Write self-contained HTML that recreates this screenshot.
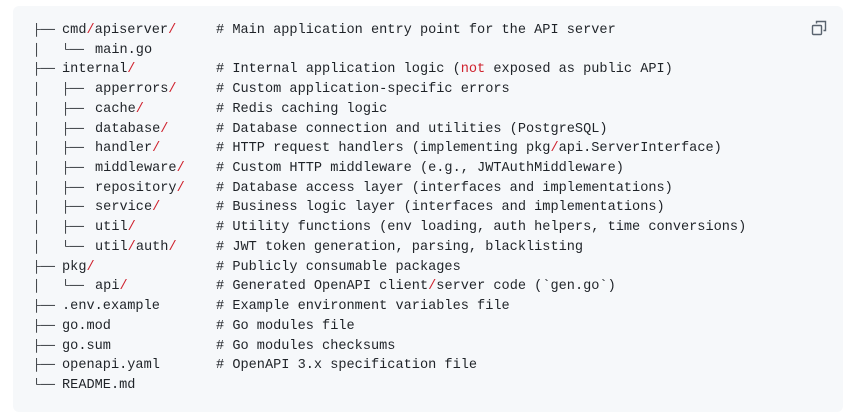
<!DOCTYPE html>
<html><head><style>
html,body{margin:0;padding:0;background:#fff;width:863px;height:420px;overflow:hidden}
.box{position:absolute;left:13px;top:6px;width:830px;height:406px;background:#f6f8fa;border-radius:6px}
.pre{position:absolute;left:20px;top:15px;font-family:"Liberation Mono",monospace;font-size:13.6px;color:#1f2328}
.l{position:relative;height:19.72px;line-height:19.72px;white-space:pre}
.l span{position:absolute;top:0}
.t1,.t2{font-size:12.2px}
.t1{left:0}.n1{left:29px}.t2{left:29px}.n2{left:62px}.c{left:183px}
i{color:#cf222e;font-style:normal}
svg{position:absolute;left:798px;top:14px}
</style></head><body>
<div class="box">
<div class="pre">
<div class="l"><span class="t1">├──</span><span class="n1">cmd<i>/</i>apiserver<i>/</i></span><span class="c"># Main application entry point for the API server</span></div>
<div class="l"><span class="t1">│</span><span class="t2">└──</span><span class="n2">main.go</span></div>
<div class="l"><span class="t1">├──</span><span class="n1">internal<i>/</i></span><span class="c"># Internal application logic (<i>not</i> exposed as public API)</span></div>
<div class="l"><span class="t1">│</span><span class="t2">├──</span><span class="n2">apperrors<i>/</i></span><span class="c"># Custom application-specific errors</span></div>
<div class="l"><span class="t1">│</span><span class="t2">├──</span><span class="n2">cache<i>/</i></span><span class="c"># Redis caching logic</span></div>
<div class="l"><span class="t1">│</span><span class="t2">├──</span><span class="n2">database<i>/</i></span><span class="c"># Database connection and utilities (PostgreSQL)</span></div>
<div class="l"><span class="t1">│</span><span class="t2">├──</span><span class="n2">handler<i>/</i></span><span class="c"># HTTP request handlers (implementing pkg<i>/</i>api.ServerInterface)</span></div>
<div class="l"><span class="t1">│</span><span class="t2">├──</span><span class="n2">middleware<i>/</i></span><span class="c"># Custom HTTP middleware (e.g., JWTAuthMiddleware)</span></div>
<div class="l"><span class="t1">│</span><span class="t2">├──</span><span class="n2">repository<i>/</i></span><span class="c"># Database access layer (interfaces and implementations)</span></div>
<div class="l"><span class="t1">│</span><span class="t2">├──</span><span class="n2">service<i>/</i></span><span class="c"># Business logic layer (interfaces and implementations)</span></div>
<div class="l"><span class="t1">│</span><span class="t2">├──</span><span class="n2">util<i>/</i></span><span class="c"># Utility functions (env loading, auth helpers, time conversions)</span></div>
<div class="l"><span class="t1">│</span><span class="t2">└──</span><span class="n2">util<i>/</i>auth<i>/</i></span><span class="c"># JWT token generation, parsing, blacklisting</span></div>
<div class="l"><span class="t1">├──</span><span class="n1">pkg<i>/</i></span><span class="c"># Publicly consumable packages</span></div>
<div class="l"><span class="t1">│</span><span class="t2">└──</span><span class="n2">api<i>/</i></span><span class="c"># Generated OpenAPI client<i>/</i>server code (`gen.go`)</span></div>
<div class="l"><span class="t1">├──</span><span class="n1">.env.example</span><span class="c"># Example environment variables file</span></div>
<div class="l"><span class="t1">├──</span><span class="n1">go.mod</span><span class="c"># Go modules file</span></div>
<div class="l"><span class="t1">├──</span><span class="n1">go.sum</span><span class="c"># Go modules checksums</span></div>
<div class="l"><span class="t1">├──</span><span class="n1">openapi.yaml</span><span class="c"># OpenAPI 3.x specification file</span></div>
<div class="l"><span class="t1">└──</span><span class="n1">README.md</span></div>
</div>
<svg width="16" height="16" viewBox="0 0 16 16" fill="none" stroke="#59636e" stroke-width="1.4"><path d="M5.5 3.5v-2h9v9h-2"/><rect x="1.5" y="5.5" width="9" height="9" rx="1"/></svg>
</div>
</body></html>
